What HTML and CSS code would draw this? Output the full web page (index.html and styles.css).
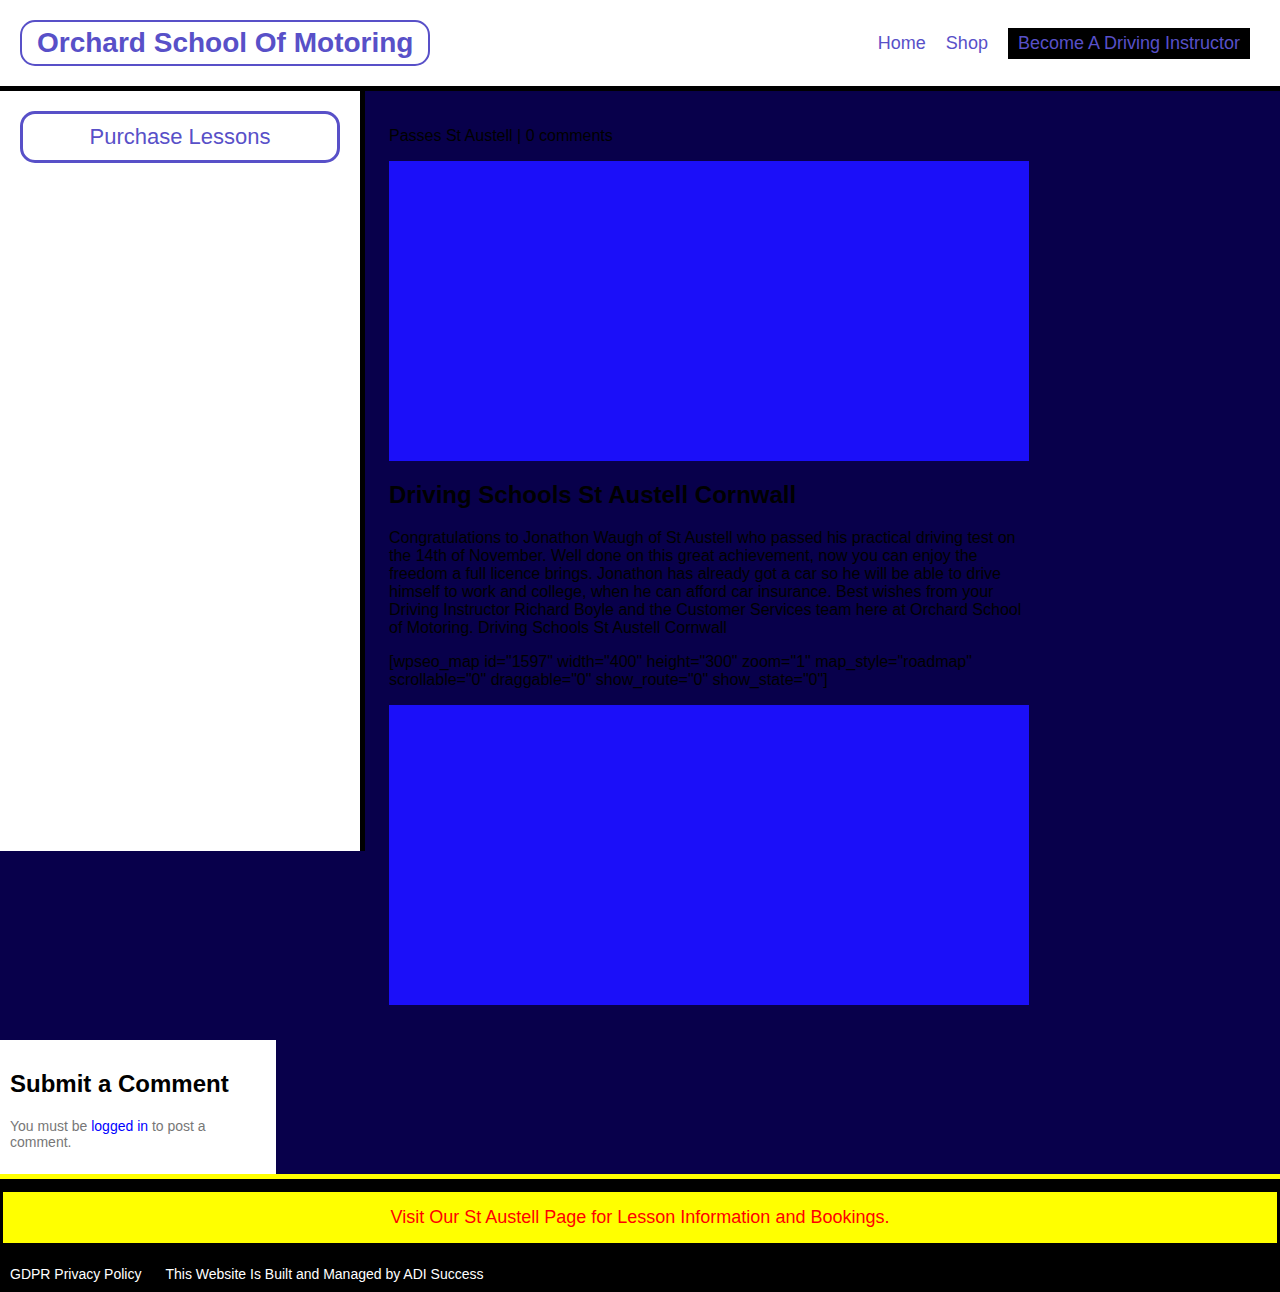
FILE: index.html
```html
<!DOCTYPE html>
<html lang="en">
<head>
  <meta charset="utf-8">
  <meta name="viewport" content="width=device-width, initial-scale=1">
  <title>Orchard School Of Motoring</title>
  <link rel="stylesheet" href="styles.css">
</head>
<body>
  <header class="site-header">
    <a class="brand" href="#">Orchard School Of Motoring</a>
    <nav class="main-nav">
      <a class="nav-link" href="#">Home</a>
      <a class="nav-link" href="#">Shop</a>
      <a class="nav-link nav-link-featured" href="#">Become A Driving Instructor</a>
    </nav>
  </header>

  <div class="layout">
    <aside class="sidebar">
      <a class="purchase" href="#">Purchase Lessons</a>
    </aside>
    <main class="content">
      <article class="post">
        <p>Passes St Austell | 0 comments</p>
        <div class="panel"></div>
        <h2>Driving Schools St Austell Cornwall</h2>
        <p>Congratulations to Jonathon Waugh of St Austell who passed his practical driving test on the 14th of November. Well done on this great achievement, now you can enjoy the freedom a full licence brings. Jonathon has already got a car so he will be able to drive himself to work and college, when he can afford car insurance. Best wishes from your Driving Instructor Richard Boyle and the Customer Services team here at Orchard School of Motoring. Driving Schools St Austell Cornwall</p>
        <p>[wpseo_map id="1597" width="400" height="300" zoom="1" map_style="roadmap" scrollable="0" draggable="0" show_route="0" show_state="0"]</p>
        <div class="panel"></div>
      </article>
    </main>
  </div>

  <section class="comment">
    <h2>Submit a Comment</h2>
    <p class="comment-note">You must be <a href="#">logged in</a> to post a comment.</p>
  </section>

  <footer class="site-footer">
    <a class="banner" href="#">Visit Our St Austell Page for Lesson Information and Bookings.</a>
    <div class="footer-links">
      <a href="#">GDPR Privacy Policy</a>
      <a href="#">This Website Is Built and Managed by ADI Success</a>
    </div>
  </footer>
</body>
</html>
```

FILE: styles.css
```css
* {
  box-sizing: border-box;
}

body {
  margin: 0;
  background: #08004b;
  color: #000;
  font-family: "Liberation Sans", Arial, sans-serif;
  font-size: 16px;
  line-height: 18px;
}

a {
  text-decoration: none;
}

h2 {
  margin: 20px 0;
  font-size: 24px;
  line-height: 28px;
}

p {
  margin: 16px 0;
}

/* Header */
.site-header {
  display: flex;
  flex-wrap: wrap;
  align-items: center;
  justify-content: space-between;
  padding: 20px;
  background: #fff;
  border-bottom: 5px solid #000;
}

.brand {
  padding: 5px 15px;
  border: 2px solid #5850c8;
  border-radius: 15px;
  color: #5850c8;
  font-size: 28px;
  font-weight: bold;
  line-height: 32px;
}

.main-nav {
  display: flex;
  flex-wrap: wrap;
  gap: 20px;
  padding-right: 10px;
}

.nav-link {
  padding: 5px 0;
  color: #5850c8;
  font-size: 18px;
  line-height: 21px;
}

.nav-link-featured {
  padding: 5px 10px;
  background: #000;
}

/* Sidebar and post */
.layout {
  display: flex;
  align-items: flex-start;
}

.sidebar {
  flex: 0 0 365px;
  min-height: 760px;
  padding: 20px;
  background: #fff;
  border-right: 5px solid #000;
}

.purchase {
  display: block;
  padding: 10px;
  border: 3px solid #5850c8;
  border-radius: 15px;
  color: #5850c8;
  font-size: 22px;
  line-height: 26px;
  text-align: center;
}

.content {
  flex: 1;
  padding: 20px 24px 35px;
}

.post {
  max-width: 640px;
}

.panel {
  height: 300px;
  background: #1b0ff9;
}

/* Comment box */
.comment {
  display: flow-root;
  width: 276px;
  padding: 10px;
  background: #fff;
}

.comment-note {
  margin: 14px 0;
  color: #777;
  font-size: 14px;
  line-height: 16px;
}

.comment-note a {
  color: #00f;
}

/* Footer */
.site-footer {
  padding: 13px 3px 10px;
  background: #000;
  border-top: 5px solid #ff0;
}

.banner {
  display: block;
  padding: 15px;
  background: #ff0;
  color: #f00;
  font-size: 18px;
  line-height: 21px;
  text-align: center;
}

.footer-links {
  display: flex;
  flex-wrap: wrap;
  gap: 24px;
  padding: 23px 7px 0;
  font-size: 14px;
  line-height: 16px;
}

.footer-links a {
  color: #fff;
}
```
